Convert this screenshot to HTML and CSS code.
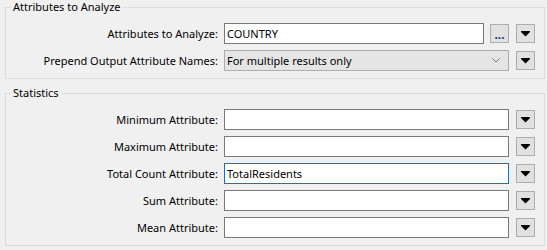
FILE: index.html
```html
<!DOCTYPE html>
<html lang="en">
<head>
    <meta charset="UTF-8">
    <title>Statistics Calculator Parameters</title>
    <link rel="stylesheet" href="styles.css">
</head>
<body>
    <fieldset class="group">
        <legend>Attributes to Analyze</legend>
        <div class="row">
            <label class="label">Attributes to Analyze:</label>
            <div class="field short">COUNTRY</div>
            <button class="btn dots">...</button>
            <button class="btn arrow"><svg width="9" height="6" viewBox="0 0 9 6"><path d="M0 0h9v1L4.5 5.5 0 1z" fill="#000"/></svg></button>
        </div>
        <div class="row">
            <label class="label">Prepend Output Attribute Names:</label>
            <div class="field combo">
                <span>For multiple results only</span>
                <svg class="chevron" width="8" height="5" viewBox="0 0 8 5"><path d="M0.5 0.5l3.5 3.5 3.5-3.5" fill="none" stroke="#777" stroke-width="1"/></svg>
            </div>
            <button class="btn arrow"><svg width="9" height="6" viewBox="0 0 9 6"><path d="M0 0h9v1L4.5 5.5 0 1z" fill="#000"/></svg></button>
        </div>
    </fieldset>

    <fieldset class="group">
        <legend>Statistics</legend>
        <div class="row">
            <label class="label">Minimum Attribute:</label>
            <div class="field"></div>
            <button class="btn arrow"><svg width="9" height="6" viewBox="0 0 9 6"><path d="M0 0h9v1L4.5 5.5 0 1z" fill="#000"/></svg></button>
        </div>
        <div class="row">
            <label class="label">Maximum Attribute:</label>
            <div class="field"></div>
            <button class="btn arrow"><svg width="9" height="6" viewBox="0 0 9 6"><path d="M0 0h9v1L4.5 5.5 0 1z" fill="#000"/></svg></button>
        </div>
        <div class="row">
            <label class="label">Total Count Attribute:</label>
            <div class="field focus">TotalResidents</div>
            <button class="btn arrow"><svg width="9" height="6" viewBox="0 0 9 6"><path d="M0 0h9v1L4.5 5.5 0 1z" fill="#000"/></svg></button>
        </div>
        <div class="row">
            <label class="label">Sum Attribute:</label>
            <div class="field"></div>
            <button class="btn arrow"><svg width="9" height="6" viewBox="0 0 9 6"><path d="M0 0h9v1L4.5 5.5 0 1z" fill="#000"/></svg></button>
        </div>
        <div class="row">
            <label class="label">Mean Attribute:</label>
            <div class="field"></div>
            <button class="btn arrow"><svg width="9" height="6" viewBox="0 0 9 6"><path d="M0 0h9v1L4.5 5.5 0 1z" fill="#000"/></svg></button>
        </div>
    </fieldset>
</body>
</html>
```

FILE: styles.css
```css
body {
    margin: 0;
    background-color: #f0f0f0;
    font-family: 'Noto Sans', 'Open Sans', sans-serif;
    font-size: 11px;
    color: #000;
}
.group {
    margin: 0 2px 7px 5px;
    padding: 9px 9px 7px 5px;
    border: 1px solid #dcdcdc;
    min-width: 0;
}
.group legend {
    padding: 0 2px;
    line-height: 14px;
}
.row {
    display: flex;
    align-items: center;
    height: 21px;
    margin-bottom: 6px;
}
.row:last-child {
    margin-bottom: 0;
}
.label {
    width: 207px;
    margin-right: 6px;
    text-align: right;
    white-space: nowrap;
}
.field {
    flex: 1;
    height: 21px;
    box-sizing: border-box;
    border: 1px solid #7a7a7a;
    background-color: #ffffff;
    padding: 0 2px;
    line-height: 19px;
    white-space: nowrap;
    overflow: hidden;
}
.field.short {
    flex: none;
    width: 260px;
}
.field.focus {
    border-color: #0078d7;
}
.field.combo {
    display: flex;
    align-items: center;
    justify-content: space-between;
    background-color: #e5e5e5;
    border-color: #adadad;
}
.chevron {
    margin-right: 6px;
}
.btn {
    width: 19px;
    height: 19px;
    box-sizing: border-box;
    padding: 0;
    margin-left: 6px;
    border: 1px solid #adadad;
    background-color: #e1e1e1;
    display: flex;
    align-items: center;
    justify-content: center;
    font-family: inherit;
}
.btn.dots {
    font-size: 12px;
    font-weight: bold;
    color: #1a3a7a;
    line-height: 12px;
    padding-top: 2px;
}
.btn.arrow {
    margin-left: 7px;
}
.btn.arrow svg {
    display: block;
    margin-top: 1px;
}
```
